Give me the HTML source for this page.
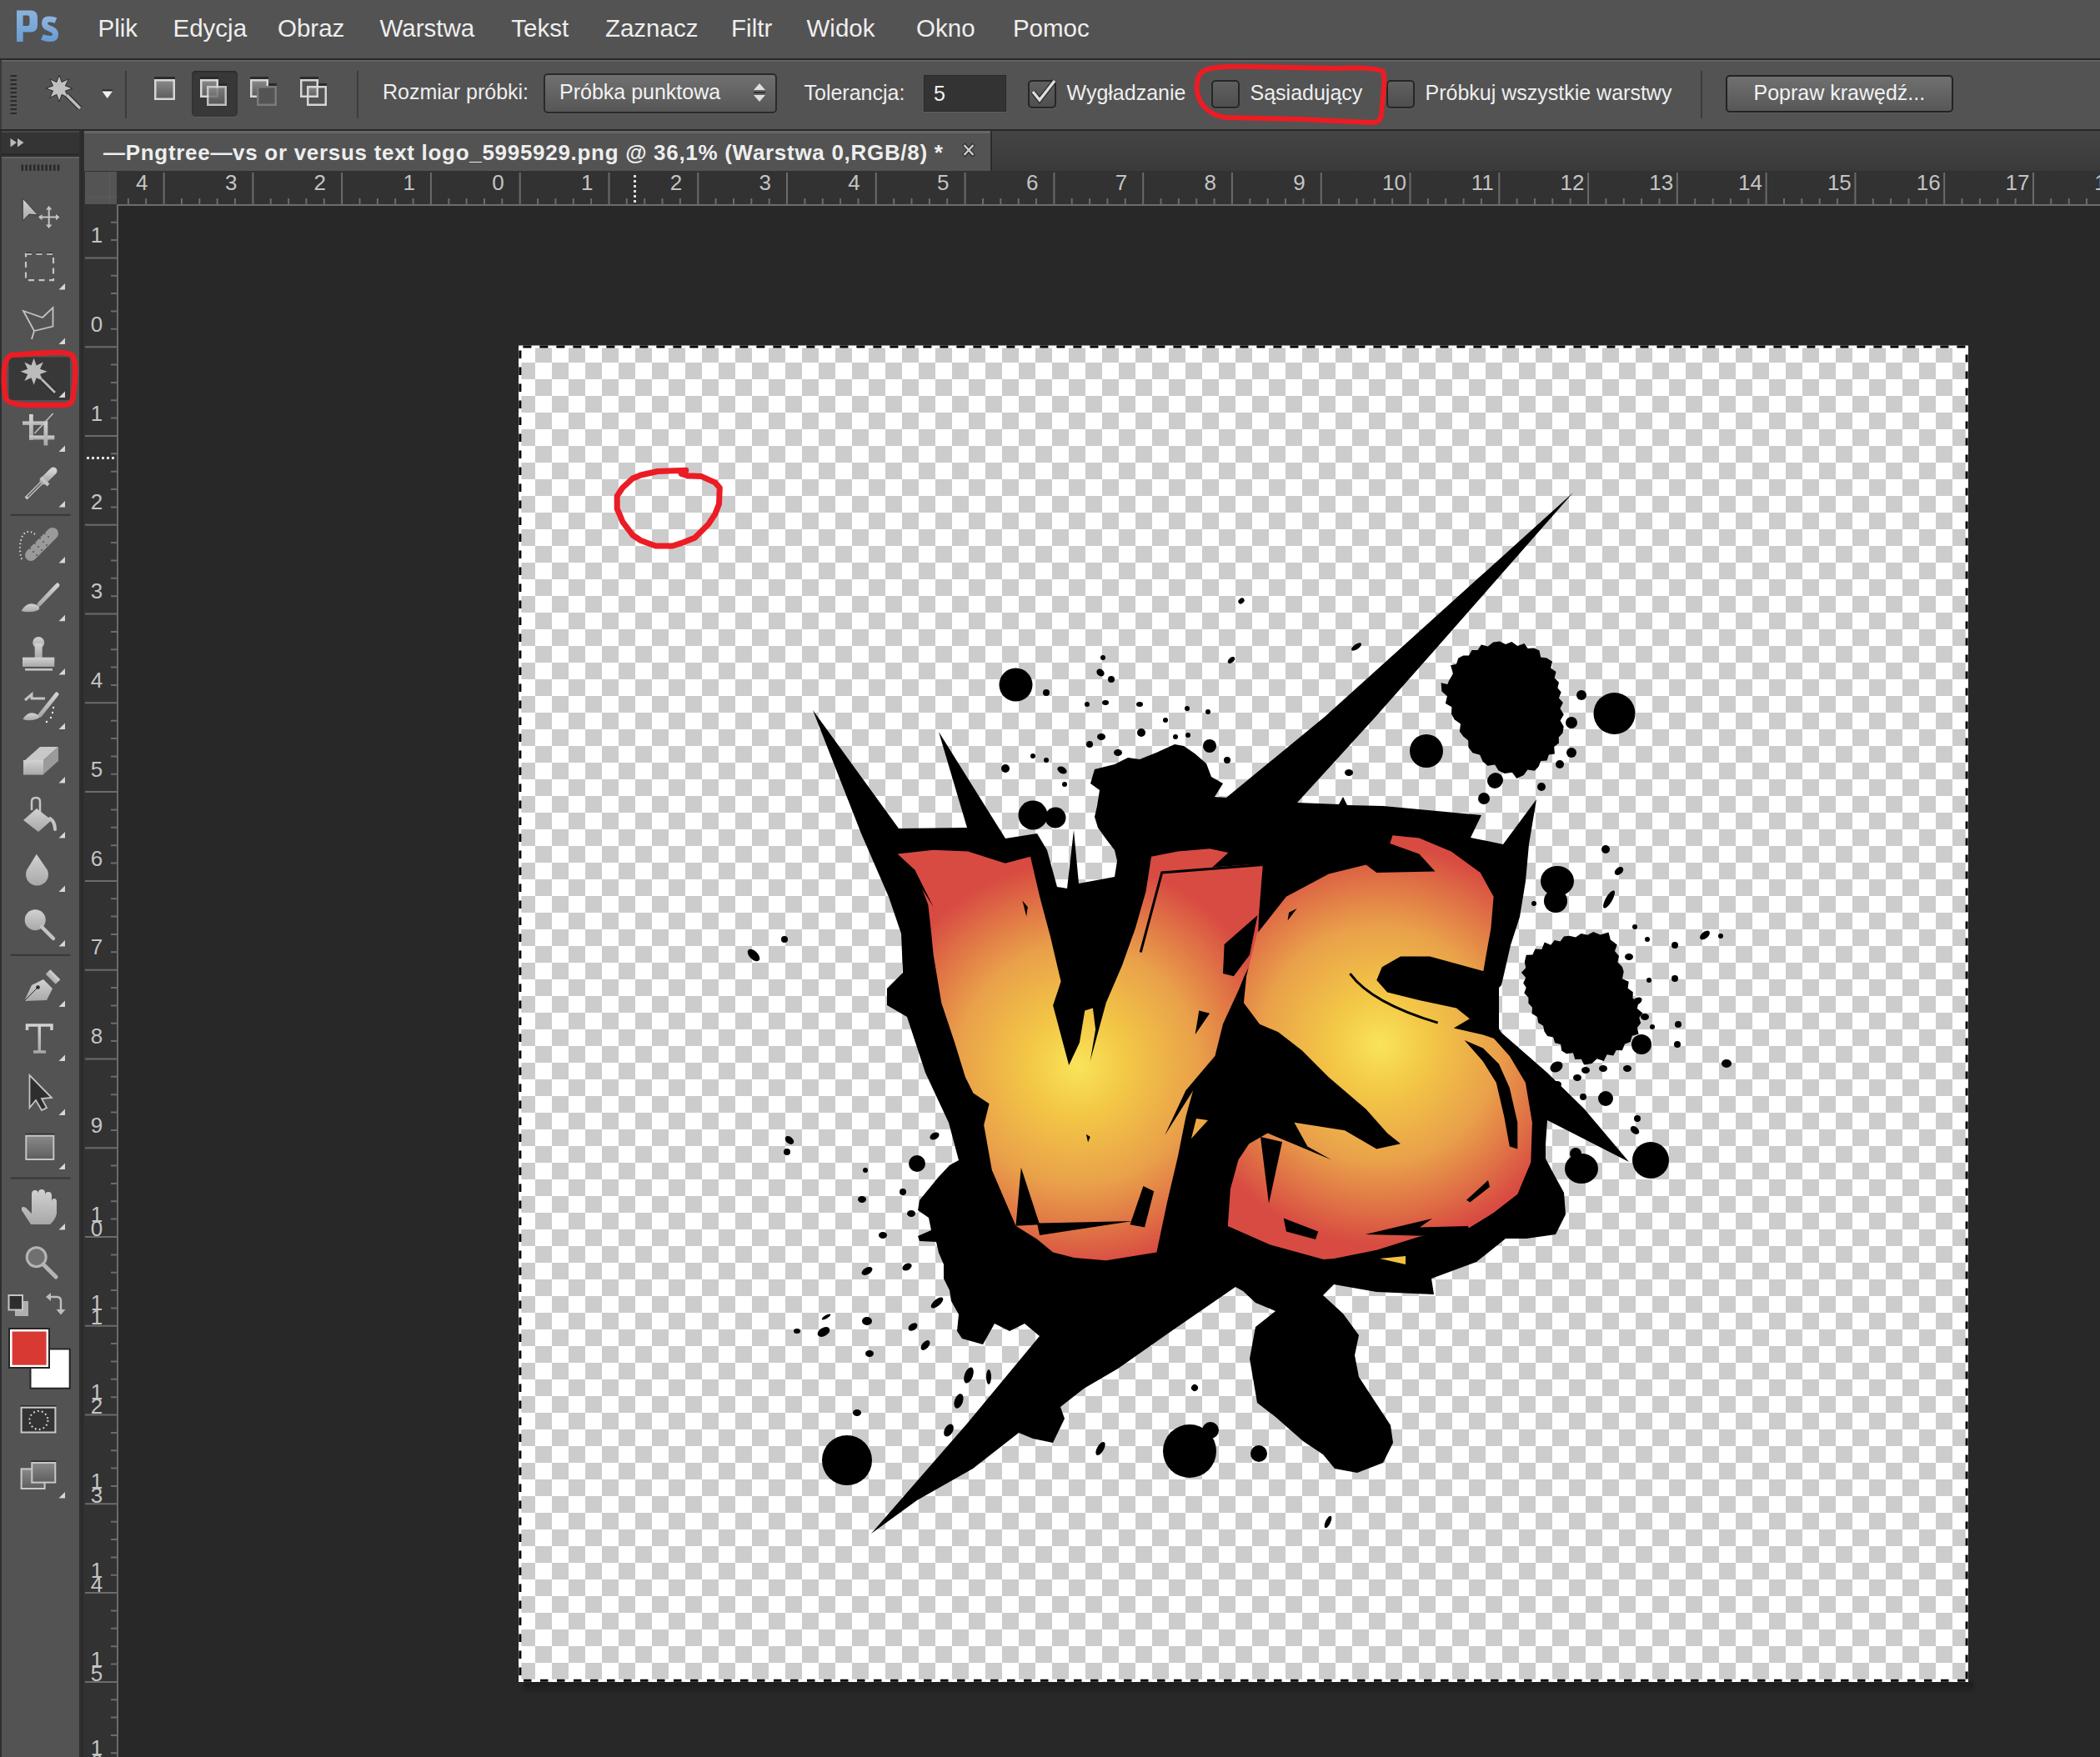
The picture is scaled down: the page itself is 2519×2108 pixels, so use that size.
<!DOCTYPE html><html><head><meta charset="utf-8"><title>ps</title><style>
*{margin:0;padding:0;box-sizing:border-box}
html,body{width:2519px;height:2108px;overflow:hidden;background:#282828;font-family:"Liberation Sans", sans-serif}
body{position:relative}
.a{position:absolute}
.t{position:absolute;white-space:pre}
svg{position:absolute;overflow:visible}
</style></head><body>
<div class="a" style="left:0px;top:0px;width:2519px;height:70px;background:#535353"></div>
<div class="a" style="left:0px;top:70px;width:2519px;height:2px;background:#2a2a2a"></div>
<svg style="left:0;top:0" width="90" height="60"><defs><linearGradient id="psg" x1="0" y1="0" x2="0" y2="1"><stop offset="0" stop-color="#8cb3de"/><stop offset="1" stop-color="#6a9dd5"/></linearGradient></defs><path fill-rule="evenodd" fill="url(#psg)" d="M20,12.4 H37 Q45,12.4 45,21 V30 Q45,38.6 37,38.6 H27.6 V50 H20 Z M27.6,18.6 H33 Q35.5,18.6 35.5,21.5 V28 Q35.5,31 33,31 H27.6 Z"/><path fill="none" stroke="url(#psg)" stroke-width="7" d="M67,24.5 Q63,23 58.5,23 Q53.5,23 53.5,28 Q53.5,32 58,33.5 L62.5,35.5 Q66.5,37.5 66.5,41.5 Q66.5,46.5 60.5,46.5 Q55,46.5 50.5,44.5"/></svg>
<div class="t" style="left:117.5px;top:19.3px;font-size:29.5px;line-height:29.5px;color:#eeeeee;font-weight:400;">Plik</div>
<div class="t" style="left:207.5px;top:19.3px;font-size:29.5px;line-height:29.5px;color:#eeeeee;font-weight:400;">Edycja</div>
<div class="t" style="left:333.0px;top:19.3px;font-size:29.5px;line-height:29.5px;color:#eeeeee;font-weight:400;">Obraz</div>
<div class="t" style="left:455.5px;top:19.3px;font-size:29.5px;line-height:29.5px;color:#eeeeee;font-weight:400;">Warstwa</div>
<div class="t" style="left:613.3px;top:19.3px;font-size:29.5px;line-height:29.5px;color:#eeeeee;font-weight:400;">Tekst</div>
<div class="t" style="left:725.9px;top:19.3px;font-size:29.5px;line-height:29.5px;color:#eeeeee;font-weight:400;">Zaznacz</div>
<div class="t" style="left:877.1px;top:19.3px;font-size:29.5px;line-height:29.5px;color:#eeeeee;font-weight:400;">Filtr</div>
<div class="t" style="left:967.5px;top:19.3px;font-size:29.5px;line-height:29.5px;color:#eeeeee;font-weight:400;">Widok</div>
<div class="t" style="left:1099.1px;top:19.3px;font-size:29.5px;line-height:29.5px;color:#eeeeee;font-weight:400;">Okno</div>
<div class="t" style="left:1214.9px;top:19.3px;font-size:29.5px;line-height:29.5px;color:#eeeeee;font-weight:400;">Pomoc</div>
<div class="a" style="left:0px;top:72px;width:2519px;height:83px;background:#535353"></div>
<div class="a" style="left:0px;top:72px;width:2519px;height:2px;background:#626262"></div>
<div class="a" style="left:0px;top:155px;width:2519px;height:2px;background:#282828"></div>
<div class="a" style="left:0px;top:157px;width:101px;height:1951px;background:#2f2f2f"></div>
<div class="a" style="left:2px;top:157px;width:93px;height:29px;background:#343434;border-top:2px solid #474747;border-bottom:2px solid #2a2a2a"></div>
<div class="a" style="left:2px;top:188px;width:93px;height:1920px;background:#535353;border-top:2px solid #626262"></div>
<div class="a" style="left:96.5px;top:157px;width:2.5px;height:1951px;background:#2a2a2a"></div>
<div class="a" style="left:101px;top:157px;width:2418px;height:48px;background:linear-gradient(#444,#3a3a3a)"></div>
<div class="a" style="left:101px;top:157px;width:1087px;height:48px;background:#535353;border-top:3px solid #666"></div>
<div class="a" style="left:1188px;top:157px;width:2px;height:48px;background:#2c2c2c"></div>
<div class="a" style="left:101px;top:205px;width:2418px;height:42px;background:#323232"></div>
<div class="a" style="left:101px;top:247px;width:41px;height:1861px;background:#323232"></div>
<div class="a" style="left:102px;top:206px;width:38px;height:39px;background:#545454"></div>
<div class="a" style="left:131px;top:206px;width:1px;height:39px;background:#5c5c5c"></div>
<div class="a" style="left:102px;top:236px;width:38px;height:1px;background:#5c5c5c"></div>
<div class="a" style="left:140px;top:245px;width:2379px;height:2px;background:#6b6b6b"></div>
<div class="a" style="left:140px;top:245px;width:2px;height:1863px;background:#6b6b6b"></div>
<svg style="left:0;top:0" width="2519" height="2108" viewBox="0 0 2519 2108"><text x="163.1" y="228" font-size="26" fill="#c4c4c4" font-family="Liberation Sans">4</text><text x="269.9" y="228" font-size="26" fill="#c4c4c4" font-family="Liberation Sans">3</text><text x="376.6" y="228" font-size="26" fill="#c4c4c4" font-family="Liberation Sans">2</text><text x="483.4" y="228" font-size="26" fill="#c4c4c4" font-family="Liberation Sans">1</text><text x="590.2" y="228" font-size="26" fill="#c4c4c4" font-family="Liberation Sans">0</text><text x="697.0" y="228" font-size="26" fill="#c4c4c4" font-family="Liberation Sans">1</text><text x="803.8" y="228" font-size="26" fill="#c4c4c4" font-family="Liberation Sans">2</text><text x="910.5" y="228" font-size="26" fill="#c4c4c4" font-family="Liberation Sans">3</text><text x="1017.3" y="228" font-size="26" fill="#c4c4c4" font-family="Liberation Sans">4</text><text x="1124.1" y="228" font-size="26" fill="#c4c4c4" font-family="Liberation Sans">5</text><text x="1230.9" y="228" font-size="26" fill="#c4c4c4" font-family="Liberation Sans">6</text><text x="1337.7" y="228" font-size="26" fill="#c4c4c4" font-family="Liberation Sans">7</text><text x="1444.4" y="228" font-size="26" fill="#c4c4c4" font-family="Liberation Sans">8</text><text x="1551.2" y="228" font-size="26" fill="#c4c4c4" font-family="Liberation Sans">9</text><text x="1658.0" y="228" font-size="26" fill="#c4c4c4" font-family="Liberation Sans">10</text><text x="1764.8" y="228" font-size="26" fill="#c4c4c4" font-family="Liberation Sans">11</text><text x="1871.6" y="228" font-size="26" fill="#c4c4c4" font-family="Liberation Sans">12</text><text x="1978.3" y="228" font-size="26" fill="#c4c4c4" font-family="Liberation Sans">13</text><text x="2085.1" y="228" font-size="26" fill="#c4c4c4" font-family="Liberation Sans">14</text><text x="2191.9" y="228" font-size="26" fill="#c4c4c4" font-family="Liberation Sans">15</text><text x="2298.7" y="228" font-size="26" fill="#c4c4c4" font-family="Liberation Sans">16</text><text x="2405.5" y="228" font-size="26" fill="#c4c4c4" font-family="Liberation Sans">17</text><text x="2512.2" y="228" font-size="26" fill="#c4c4c4" font-family="Liberation Sans">18</text><path d="M153.9 238V245 M175.2 238V245 M196.6 207V245 M217.9 238V245 M239.3 238V245 M260.6 238V245 M282.0 238V245 M303.4 207V245 M324.7 238V245 M346.1 238V245 M367.4 238V245 M388.8 238V245 M410.1 207V245 M431.5 238V245 M452.9 238V245 M474.2 238V245 M495.6 238V245 M516.9 207V245 M538.3 238V245 M559.6 238V245 M581.0 238V245 M602.3 238V245 M623.7 207V245 M645.1 238V245 M666.4 238V245 M687.8 238V245 M709.1 238V245 M730.5 207V245 M751.8 238V245 M773.2 238V245 M794.5 238V245 M815.9 238V245 M837.3 207V245 M858.6 238V245 M880.0 238V245 M901.3 238V245 M922.7 238V245 M944.0 207V245 M965.4 238V245 M986.8 238V245 M1008.1 238V245 M1029.5 238V245 M1050.8 207V245 M1072.2 238V245 M1093.5 238V245 M1114.9 238V245 M1136.2 238V245 M1157.6 207V245 M1179.0 238V245 M1200.3 238V245 M1221.7 238V245 M1243.0 238V245 M1264.4 207V245 M1285.7 238V245 M1307.1 238V245 M1328.4 238V245 M1349.8 238V245 M1371.2 207V245 M1392.5 238V245 M1413.9 238V245 M1435.2 238V245 M1456.6 238V245 M1477.9 207V245 M1499.3 238V245 M1520.7 238V245 M1542.0 238V245 M1563.4 238V245 M1584.7 207V245 M1606.1 238V245 M1627.4 238V245 M1648.8 238V245 M1670.1 238V245 M1691.5 207V245 M1712.9 238V245 M1734.2 238V245 M1755.6 238V245 M1776.9 238V245 M1798.3 207V245 M1819.6 238V245 M1841.0 238V245 M1862.3 238V245 M1883.7 238V245 M1905.1 207V245 M1926.4 238V245 M1947.8 238V245 M1969.1 238V245 M1990.5 238V245 M2011.8 207V245 M2033.2 238V245 M2054.6 238V245 M2075.9 238V245 M2097.3 238V245 M2118.6 207V245 M2140.0 238V245 M2161.3 238V245 M2182.7 238V245 M2204.0 238V245 M2225.4 207V245 M2246.8 238V245 M2268.1 238V245 M2289.5 238V245 M2310.8 238V245 M2332.2 207V245 M2353.5 238V245 M2374.9 238V245 M2396.2 238V245 M2417.6 238V245 M2439.0 207V245 M2460.3 238V245 M2481.7 238V245 M2503.0 238V245" stroke="#6b6b6b" stroke-width="2" fill="none"/><text x="116" y="291.0" text-anchor="middle" font-size="26" fill="#c4c4c4" font-family="Liberation Sans">1</text><text x="116" y="397.8" text-anchor="middle" font-size="26" fill="#c4c4c4" font-family="Liberation Sans">0</text><text x="116" y="504.6" text-anchor="middle" font-size="26" fill="#c4c4c4" font-family="Liberation Sans">1</text><text x="116" y="611.4" text-anchor="middle" font-size="26" fill="#c4c4c4" font-family="Liberation Sans">2</text><text x="116" y="718.1" text-anchor="middle" font-size="26" fill="#c4c4c4" font-family="Liberation Sans">3</text><text x="116" y="824.9" text-anchor="middle" font-size="26" fill="#c4c4c4" font-family="Liberation Sans">4</text><text x="116" y="931.7" text-anchor="middle" font-size="26" fill="#c4c4c4" font-family="Liberation Sans">5</text><text x="116" y="1038.5" text-anchor="middle" font-size="26" fill="#c4c4c4" font-family="Liberation Sans">6</text><text x="116" y="1145.3" text-anchor="middle" font-size="26" fill="#c4c4c4" font-family="Liberation Sans">7</text><text x="116" y="1252.0" text-anchor="middle" font-size="26" fill="#c4c4c4" font-family="Liberation Sans">8</text><text x="116" y="1358.8" text-anchor="middle" font-size="26" fill="#c4c4c4" font-family="Liberation Sans">9</text><text x="116" y="1465.6" text-anchor="middle" font-size="26" fill="#c4c4c4" font-family="Liberation Sans">1</text><text x="116" y="1482.6" text-anchor="middle" font-size="26" fill="#c4c4c4" font-family="Liberation Sans">0</text><text x="116" y="1572.4" text-anchor="middle" font-size="26" fill="#c4c4c4" font-family="Liberation Sans">1</text><text x="116" y="1589.4" text-anchor="middle" font-size="26" fill="#c4c4c4" font-family="Liberation Sans">1</text><text x="116" y="1679.2" text-anchor="middle" font-size="26" fill="#c4c4c4" font-family="Liberation Sans">1</text><text x="116" y="1696.2" text-anchor="middle" font-size="26" fill="#c4c4c4" font-family="Liberation Sans">2</text><text x="116" y="1785.9" text-anchor="middle" font-size="26" fill="#c4c4c4" font-family="Liberation Sans">1</text><text x="116" y="1802.9" text-anchor="middle" font-size="26" fill="#c4c4c4" font-family="Liberation Sans">3</text><text x="116" y="1892.7" text-anchor="middle" font-size="26" fill="#c4c4c4" font-family="Liberation Sans">1</text><text x="116" y="1909.7" text-anchor="middle" font-size="26" fill="#c4c4c4" font-family="Liberation Sans">4</text><text x="116" y="1999.5" text-anchor="middle" font-size="26" fill="#c4c4c4" font-family="Liberation Sans">1</text><text x="116" y="2016.5" text-anchor="middle" font-size="26" fill="#c4c4c4" font-family="Liberation Sans">5</text><text x="116" y="2106.3" text-anchor="middle" font-size="26" fill="#c4c4c4" font-family="Liberation Sans">1</text><text x="116" y="2123.3" text-anchor="middle" font-size="26" fill="#c4c4c4" font-family="Liberation Sans">6</text><text x="116" y="2213.1" text-anchor="middle" font-size="26" fill="#c4c4c4" font-family="Liberation Sans">1</text><text x="116" y="2230.1" text-anchor="middle" font-size="26" fill="#c4c4c4" font-family="Liberation Sans">7</text><path d="M133 266.7H141 M133 288.1H141 M102 309.4H141 M133 330.8H141 M133 352.1H141 M133 373.5H141 M133 394.8H141 M102 416.2H141 M133 437.6H141 M133 458.9H141 M133 480.3H141 M133 501.6H141 M102 523.0H141 M133 544.3H141 M133 565.7H141 M133 587.0H141 M133 608.4H141 M102 629.8H141 M133 651.1H141 M133 672.5H141 M133 693.8H141 M133 715.2H141 M102 736.5H141 M133 757.9H141 M133 779.3H141 M133 800.6H141 M133 822.0H141 M102 843.3H141 M133 864.7H141 M133 886.0H141 M133 907.4H141 M133 928.7H141 M102 950.1H141 M133 971.5H141 M133 992.8H141 M133 1014.2H141 M133 1035.5H141 M102 1056.9H141 M133 1078.2H141 M133 1099.6H141 M133 1120.9H141 M133 1142.3H141 M102 1163.7H141 M133 1185.0H141 M133 1206.4H141 M133 1227.7H141 M133 1249.1H141 M102 1270.4H141 M133 1291.8H141 M133 1313.2H141 M133 1334.5H141 M133 1355.9H141 M102 1377.2H141 M133 1398.6H141 M133 1419.9H141 M133 1441.3H141 M133 1462.6H141 M102 1484.0H141 M133 1505.4H141 M133 1526.7H141 M133 1548.1H141 M133 1569.4H141 M102 1590.8H141 M133 1612.1H141 M133 1633.5H141 M133 1654.8H141 M133 1676.2H141 M102 1697.6H141 M133 1718.9H141 M133 1740.3H141 M133 1761.6H141 M133 1783.0H141 M102 1804.3H141 M133 1825.7H141 M133 1847.1H141 M133 1868.4H141 M133 1889.8H141 M102 1911.1H141 M133 1932.5H141 M133 1953.8H141 M133 1975.2H141 M133 1996.5H141 M102 2017.9H141 M133 2039.3H141 M133 2060.6H141 M133 2082.0H141 M133 2103.3H141" stroke="#6b6b6b" stroke-width="2" fill="none"/><path d="M761.5 210V243" stroke="#dddddd" stroke-width="3" stroke-dasharray="3 3" fill="none"/><path d="M104 549.5H139" stroke="#dddddd" stroke-width="3" stroke-dasharray="3 3" fill="none"/></svg>
<div class="a" style="left:628px;top:2018px;width:1739px;height:14px;background:linear-gradient(rgba(0,0,0,0.32),rgba(0,0,0,0));filter:blur(1.5px)"></div>
<div class="a" style="left:622px;top:415px;width:1739px;height:1603px;background:repeating-conic-gradient(#cccccc 0 25%,#ffffff 0 50%) 0 0/40px 40px"></div>
<svg style="left:0;top:0" width="2519" height="2108" viewBox="0 0 2519 2108">
<defs>
<radialGradient id="gv" gradientUnits="userSpaceOnUse" cx="1293" cy="1278" r="290" fx="1293" fy="1278">
<stop offset="0" stop-color="#f9e45a"/><stop offset="0.2" stop-color="#f3c846"/><stop offset="0.5" stop-color="#e9a04a"/><stop offset="0.72" stop-color="#de6a45"/><stop offset="0.84" stop-color="#d84b42"/><stop offset="1" stop-color="#d84b42"/></radialGradient>
<radialGradient id="gs" gradientUnits="userSpaceOnUse" cx="1655" cy="1253" r="285" fx="1655" fy="1253">
<stop offset="0" stop-color="#f9e45a"/><stop offset="0.2" stop-color="#f3c846"/><stop offset="0.5" stop-color="#e9a04a"/><stop offset="0.72" stop-color="#de6a45"/><stop offset="0.84" stop-color="#d84b42"/><stop offset="1" stop-color="#d84b42"/></radialGradient>
<clipPath id="cv"><rect x="622" y="415" width="1739" height="1603"/></clipPath>
</defs>
<g clip-path="url(#cv)">
<path d="M975.0,852.0 L1078.0,994.0 L1160.0,993.0 L1126.0,878.0 L1206.0,1006.0 L1244.0,1000.0 L1256.0,1020.0 L1268.0,1064.0 L1280.0,1066.0 L1288.0,996.0 L1294.0,1060.0 L1337.0,1052.0 L1340.0,1033.0 L1337.0,1020.0 L1327.0,1007.0 L1317.0,993.0 L1313.0,980.0 L1316.0,967.0 L1319.0,948.0 L1308.0,940.0 L1313.0,923.0 L1337.0,917.0 L1353.0,909.0 L1367.0,911.0 L1387.0,903.0 L1409.0,893.0 L1420.0,895.0 L1433.0,904.0 L1447.0,916.0 L1453.0,932.0 L1467.0,940.0 L1457.0,956.0 L1471.0,957.0 L1589.0,860.0 L1887.0,591.0 L1720.0,781.0 L1650.0,860.0 L1556.0,963.0 L1606.0,965.0 L1611.0,956.0 L1616.0,966.0 L1659.0,967.0 L1777.0,978.0 L1764.0,1005.0 L1803.0,1013.0 L1843.0,959.0 L1834.0,1013.0 L1830.0,1057.0 L1823.0,1100.0 L1812.0,1134.0 L1801.0,1182.0 L1779.0,1204.0 L1801.0,1239.0 L1856.0,1287.0 L1900.0,1330.0 L1954.0,1394.0 L1856.0,1344.0 L1854.0,1373.0 L1854.0,1390.0 L1864.0,1409.0 L1876.0,1431.0 L1878.0,1457.0 L1866.0,1481.0 L1831.0,1486.0 L1806.0,1486.0 L1771.0,1514.0 L1717.0,1534.0 L1720.0,1553.0 L1651.0,1550.0 L1600.0,1541.0 L1587.0,1554.0 L1611.0,1576.0 L1630.0,1602.0 L1625.0,1626.0 L1630.0,1652.0 L1647.0,1678.0 L1668.0,1710.0 L1671.0,1731.0 L1659.0,1755.0 L1628.0,1767.0 L1601.0,1762.0 L1587.0,1745.0 L1563.0,1729.0 L1530.0,1700.0 L1508.0,1683.0 L1499.0,1630.0 L1506.0,1592.0 L1530.0,1573.0 L1506.0,1563.0 L1491.0,1549.0 L1482.0,1544.0 L1408.0,1595.0 L1341.0,1642.0 L1300.0,1666.0 L1272.0,1688.0 L1277.0,1702.0 L1263.0,1731.0 L1239.0,1726.0 L1222.0,1719.0 L1167.0,1762.0 L1100.0,1800.0 L1045.0,1840.0 L1160.0,1708.0 L1247.0,1603.0 L1229.0,1588.0 L1211.0,1597.0 L1193.0,1588.0 L1179.0,1613.0 L1154.0,1606.0 L1148.0,1597.0 L1150.0,1577.0 L1141.0,1561.0 L1139.0,1548.0 L1132.0,1534.0 L1132.0,1517.0 L1126.0,1503.0 L1123.0,1490.0 L1103.0,1489.0 L1101.0,1483.0 L1117.0,1476.0 L1114.0,1461.0 L1101.0,1452.0 L1103.0,1440.0 L1125.0,1413.0 L1139.0,1398.0 L1150.0,1392.0 L1138.0,1347.0 L1110.0,1287.0 L1088.0,1220.0 L1064.0,1206.0 L1064.0,1186.0 L1083.0,1167.0 L1081.0,1120.0 L1066.0,1076.0 L1033.0,1000.0Z" fill="#000"/>
<circle cx="1218.5" cy="821.6" r="20" fill="#000"/>
<circle cx="1239" cy="978" r="17.5" fill="#000"/>
<circle cx="1266" cy="981" r="12.5" fill="#000"/>
<circle cx="1936.5" cy="856" r="25" fill="#000"/>
<circle cx="1897" cy="834" r="6" fill="#000"/>
<circle cx="1885" cy="867" r="7" fill="#000"/>
<circle cx="1794" cy="936" r="9" fill="#000"/>
<circle cx="1780" cy="958" r="7" fill="#000"/>
<circle cx="1885" cy="903" r="6" fill="#000"/>
<circle cx="1871" cy="917" r="5" fill="#000"/>
<circle cx="1849" cy="944" r="5" fill="#000"/>
<circle cx="1451" cy="895" r="8" fill="#000"/>
<circle cx="1711" cy="901" r="20" fill="#000"/>
<circle cx="1793" cy="937" r="9" fill="#000"/>
<circle cx="1016" cy="1752" r="30" fill="#000"/>
<circle cx="1427" cy="1741" r="32" fill="#000"/>
<circle cx="1452" cy="1716" r="10" fill="#000"/>
<circle cx="1510" cy="1744" r="10" fill="#000"/>
<circle cx="1100" cy="1396" r="10" fill="#000"/>
<path d="M1740.1,798.3 L1747.0,796.8 L1749.2,789.8 L1755.1,786.5 L1762.0,786.4 L1765.5,780.0 L1772.5,779.9 L1776.8,773.5 L1784.8,775.4 L1791.2,770.5 L1799.0,769.6 L1806.0,772.9 L1813.4,770.1 L1820.2,775.0 L1828.5,772.1 L1832.6,777.9 L1840.1,777.6 L1846.5,780.5 L1848.1,788.4 L1855.4,789.4 L1862.0,793.8 L1860.2,801.5 L1866.5,805.9 L1864.7,813.6 L1870.0,818.7 L1868.4,825.2 L1872.7,830.6 L1869.9,837.4 L1874.9,843.0 L1871.4,850.1 L1875.8,857.3 L1871.6,864.5 L1875.7,871.7 L1874.5,879.4 L1869.7,884.4 L1870.0,891.5 L1864.2,896.1 L1864.9,904.6 L1857.8,905.5 L1855.6,912.5 L1848.2,913.1 L1845.6,919.7 L1840.9,924.7 L1832.4,923.5 L1827.7,930.0 L1819.3,933.9 L1813.9,926.8 L1804.7,928.1 L1797.5,924.6 L1793.1,917.5 L1784.5,918.7 L1778.5,913.5 L1775.2,905.7 L1766.4,903.3 L1761.4,896.4 L1761.2,888.5 L1755.2,883.5 L1750.8,877.6 L1752.0,868.5 L1744.6,863.2 L1741.0,856.6 L1741.4,848.3 L1733.9,843.9 L1735.9,835.3 L1729.4,829.5 L1728.6,819.2 L1736.3,820.9 L1738.0,816.7 L1743.0,808.3Z" fill="#000"/>
<path d="M1830.8,1145.8 L1838.3,1145.4 L1841.5,1138.6 L1849.4,1138.9 L1852.7,1130.5 L1860.2,1133.8 L1864.7,1128.1 L1871.5,1129.5 L1875.9,1123.5 L1882.3,1122.8 L1890.0,1124.6 L1896.6,1120.1 L1904.3,1121.8 L1911.3,1117.9 L1919.6,1121.4 L1929.5,1118.5 L1931.8,1127.4 L1939.8,1133.4 L1937.0,1141.0 L1942.0,1146.9 L1940.4,1154.3 L1945.9,1160.1 L1947.7,1165.8 L1946.0,1174.2 L1953.7,1177.8 L1952.6,1185.8 L1958.8,1190.2 L1958.5,1197.8 L1965.7,1201.7 L1963.8,1210.1 L1970.4,1215.5 L1966.3,1220.9 L1968.2,1227.5 L1963.9,1232.9 L1965.6,1240.8 L1957.9,1242.7 L1955.7,1250.1 L1948.9,1252.8 L1945.9,1260.3 L1938.7,1260.0 L1935.3,1266.5 L1927.6,1265.3 L1923.8,1273.0 L1915.7,1270.2 L1909.5,1276.1 L1900.1,1277.4 L1896.9,1270.8 L1889.3,1271.1 L1886.9,1263.3 L1878.9,1264.3 L1873.1,1260.4 L1872.1,1252.9 L1865.1,1251.2 L1863.2,1244.5 L1856.2,1243.0 L1852.5,1237.6 L1851.1,1230.7 L1845.1,1227.0 L1844.0,1219.9 L1837.5,1216.0 L1838.0,1208.8 L1833.4,1203.8 L1833.4,1196.8 L1828.3,1191.4 L1830.7,1185.1 L1827.2,1179.5 L1830.2,1173.1 L1824.9,1166.7 L1830.2,1161.2 L1828.8,1154.1Z" fill="#000"/>
<ellipse cx="1255" cy="831" rx="4" ry="4" transform="rotate(0 1255 831)" fill="#000"/>
<ellipse cx="1206" cy="922" rx="5" ry="5" transform="rotate(0 1206 922)" fill="#000"/>
<ellipse cx="1239" cy="907" rx="3" ry="3" transform="rotate(0 1239 907)" fill="#000"/>
<ellipse cx="1255" cy="912" rx="3" ry="3" transform="rotate(0 1255 912)" fill="#000"/>
<ellipse cx="1274" cy="924" rx="6" ry="4" transform="rotate(30 1274 924)" fill="#000"/>
<ellipse cx="1277" cy="941" rx="3" ry="3" transform="rotate(0 1277 941)" fill="#000"/>
<ellipse cx="1489" cy="721" rx="4" ry="3" transform="rotate(-40 1489 721)" fill="#000"/>
<ellipse cx="1477" cy="792" rx="5" ry="3" transform="rotate(-40 1477 792)" fill="#000"/>
<ellipse cx="1627" cy="776" rx="7" ry="3" transform="rotate(-35 1627 776)" fill="#000"/>
<ellipse cx="1323" cy="789" rx="3" ry="3" transform="rotate(0 1323 789)" fill="#000"/>
<ellipse cx="1320" cy="807" rx="5" ry="4" transform="rotate(40 1320 807)" fill="#000"/>
<ellipse cx="1333" cy="815" rx="4" ry="4" transform="rotate(0 1333 815)" fill="#000"/>
<ellipse cx="1304" cy="845" rx="3" ry="3" transform="rotate(0 1304 845)" fill="#000"/>
<ellipse cx="1326" cy="843" rx="4" ry="3" transform="rotate(0 1326 843)" fill="#000"/>
<ellipse cx="1367" cy="845" rx="4" ry="3" transform="rotate(0 1367 845)" fill="#000"/>
<ellipse cx="1424" cy="850" rx="3" ry="3" transform="rotate(0 1424 850)" fill="#000"/>
<ellipse cx="1449" cy="854" rx="3" ry="3" transform="rotate(0 1449 854)" fill="#000"/>
<ellipse cx="1398" cy="864" rx="3" ry="3" transform="rotate(0 1398 864)" fill="#000"/>
<ellipse cx="1369" cy="879" rx="5" ry="5" transform="rotate(0 1369 879)" fill="#000"/>
<ellipse cx="1321" cy="884" rx="5" ry="4" transform="rotate(0 1321 884)" fill="#000"/>
<ellipse cx="1410" cy="884" rx="3" ry="3" transform="rotate(0 1410 884)" fill="#000"/>
<ellipse cx="1425" cy="882" rx="3" ry="3" transform="rotate(0 1425 882)" fill="#000"/>
<ellipse cx="1472" cy="912" rx="4" ry="4" transform="rotate(0 1472 912)" fill="#000"/>
<ellipse cx="1307" cy="893" rx="4" ry="4" transform="rotate(0 1307 893)" fill="#000"/>
<ellipse cx="1341" cy="903" rx="5" ry="4" transform="rotate(0 1341 903)" fill="#000"/>
<ellipse cx="1618" cy="927" rx="5" ry="4" transform="rotate(0 1618 927)" fill="#000"/>
<ellipse cx="1926" cy="1019" rx="5" ry="5" transform="rotate(0 1926 1019)" fill="#000"/>
<ellipse cx="1942" cy="1045" rx="6" ry="4" transform="rotate(-40 1942 1045)" fill="#000"/>
<ellipse cx="1930" cy="1079" rx="4" ry="12" transform="rotate(30 1930 1079)" fill="#000"/>
<ellipse cx="1840" cy="1084" rx="3" ry="3" transform="rotate(0 1840 1084)" fill="#000"/>
<ellipse cx="1961" cy="1112" rx="3" ry="3" transform="rotate(0 1961 1112)" fill="#000"/>
<ellipse cx="1976" cy="1127" rx="3" ry="3" transform="rotate(0 1976 1127)" fill="#000"/>
<ellipse cx="2009" cy="1134" rx="4" ry="4" transform="rotate(0 2009 1134)" fill="#000"/>
<ellipse cx="2045" cy="1122" rx="7" ry="4" transform="rotate(-40 2045 1122)" fill="#000"/>
<ellipse cx="2064" cy="1123" rx="3" ry="3" transform="rotate(0 2064 1123)" fill="#000"/>
<ellipse cx="1954" cy="1148" rx="5" ry="4" transform="rotate(0 1954 1148)" fill="#000"/>
<ellipse cx="1978" cy="1176" rx="3" ry="3" transform="rotate(0 1978 1176)" fill="#000"/>
<ellipse cx="2009" cy="1174" rx="4" ry="4" transform="rotate(0 2009 1174)" fill="#000"/>
<ellipse cx="1964" cy="1201" rx="6" ry="4" transform="rotate(-30 1964 1201)" fill="#000"/>
<ellipse cx="1973" cy="1220" rx="5" ry="4" transform="rotate(0 1973 1220)" fill="#000"/>
<ellipse cx="2013" cy="1229" rx="4" ry="4" transform="rotate(0 2013 1229)" fill="#000"/>
<ellipse cx="1982" cy="1232" rx="3" ry="3" transform="rotate(0 1982 1232)" fill="#000"/>
<ellipse cx="2012" cy="1253" rx="4" ry="4" transform="rotate(0 2012 1253)" fill="#000"/>
<ellipse cx="1969" cy="1253" rx="12" ry="12" transform="rotate(0 1969 1253)" fill="#000"/>
<ellipse cx="1952" cy="1282" rx="5" ry="4" transform="rotate(0 1952 1282)" fill="#000"/>
<ellipse cx="1923" cy="1282" rx="5" ry="4" transform="rotate(0 1923 1282)" fill="#000"/>
<ellipse cx="1902" cy="1284" rx="5" ry="4" transform="rotate(0 1902 1284)" fill="#000"/>
<ellipse cx="1867" cy="1280" rx="8" ry="6" transform="rotate(-30 1867 1280)" fill="#000"/>
<ellipse cx="1892" cy="1293" rx="5" ry="4" transform="rotate(0 1892 1293)" fill="#000"/>
<ellipse cx="1868" cy="1301" rx="5" ry="4" transform="rotate(0 1868 1301)" fill="#000"/>
<ellipse cx="1899" cy="1316" rx="4" ry="4" transform="rotate(0 1899 1316)" fill="#000"/>
<ellipse cx="1926" cy="1318" rx="9" ry="9" transform="rotate(0 1926 1318)" fill="#000"/>
<ellipse cx="1964" cy="1342" rx="4" ry="4" transform="rotate(0 1964 1342)" fill="#000"/>
<ellipse cx="1961" cy="1356" rx="6" ry="4" transform="rotate(40 1961 1356)" fill="#000"/>
<ellipse cx="2071" cy="1276" rx="6" ry="5" transform="rotate(0 2071 1276)" fill="#000"/>
<ellipse cx="1980" cy="1392" rx="22" ry="22" transform="rotate(0 1980 1392)" fill="#000"/>
<ellipse cx="1897" cy="1402" rx="20" ry="18" transform="rotate(0 1897 1402)" fill="#000"/>
<ellipse cx="1890" cy="1384" rx="7" ry="7" transform="rotate(0 1890 1384)" fill="#000"/>
<ellipse cx="941" cy="1127" rx="4" ry="4" transform="rotate(0 941 1127)" fill="#000"/>
<ellipse cx="904" cy="1146" rx="9" ry="5" transform="rotate(45 904 1146)" fill="#000"/>
<ellipse cx="1121" cy="1363" rx="6" ry="4" transform="rotate(-30 1121 1363)" fill="#000"/>
<ellipse cx="947" cy="1368" rx="6" ry="4" transform="rotate(40 947 1368)" fill="#000"/>
<ellipse cx="944" cy="1382" rx="4" ry="4" transform="rotate(0 944 1382)" fill="#000"/>
<ellipse cx="1038" cy="1404" rx="3" ry="3" transform="rotate(0 1038 1404)" fill="#000"/>
<ellipse cx="1083" cy="1430" rx="4" ry="4" transform="rotate(0 1083 1430)" fill="#000"/>
<ellipse cx="1034" cy="1439" rx="5" ry="4" transform="rotate(0 1034 1439)" fill="#000"/>
<ellipse cx="1093" cy="1456" rx="5" ry="4" transform="rotate(0 1093 1456)" fill="#000"/>
<ellipse cx="1059" cy="1482" rx="5" ry="4" transform="rotate(0 1059 1482)" fill="#000"/>
<ellipse cx="1088" cy="1520" rx="6" ry="4" transform="rotate(-30 1088 1520)" fill="#000"/>
<ellipse cx="1040" cy="1525" rx="7" ry="4" transform="rotate(-30 1040 1525)" fill="#000"/>
<ellipse cx="1124" cy="1563" rx="9" ry="4" transform="rotate(-40 1124 1563)" fill="#000"/>
<ellipse cx="991" cy="1580" rx="6" ry="2" transform="rotate(-30 991 1580)" fill="#000"/>
<ellipse cx="1040" cy="1585" rx="6" ry="5" transform="rotate(0 1040 1585)" fill="#000"/>
<ellipse cx="1095" cy="1592" rx="6" ry="4" transform="rotate(-35 1095 1592)" fill="#000"/>
<ellipse cx="988" cy="1598" rx="8" ry="5" transform="rotate(-30 988 1598)" fill="#000"/>
<ellipse cx="956" cy="1597" rx="4" ry="3" transform="rotate(0 956 1597)" fill="#000"/>
<ellipse cx="1110" cy="1614" rx="7" ry="4" transform="rotate(-50 1110 1614)" fill="#000"/>
<ellipse cx="1043" cy="1624" rx="5" ry="4" transform="rotate(0 1043 1624)" fill="#000"/>
<ellipse cx="1162" cy="1650" rx="5" ry="10" transform="rotate(20 1162 1650)" fill="#000"/>
<ellipse cx="1186" cy="1652" rx="3" ry="9" transform="rotate(0 1186 1652)" fill="#000"/>
<ellipse cx="1150" cy="1681" rx="5" ry="9" transform="rotate(20 1150 1681)" fill="#000"/>
<ellipse cx="1028" cy="1695" rx="5" ry="4" transform="rotate(0 1028 1695)" fill="#000"/>
<ellipse cx="1138" cy="1716" rx="5" ry="8" transform="rotate(30 1138 1716)" fill="#000"/>
<ellipse cx="1433" cy="1665" rx="4" ry="4" transform="rotate(40 1433 1665)" fill="#000"/>
<ellipse cx="1320" cy="1738" rx="4" ry="9" transform="rotate(30 1320 1738)" fill="#000"/>
<ellipse cx="1593" cy="1826" rx="3" ry="8" transform="rotate(25 1593 1826)" fill="#000"/>
<ellipse cx="1868" cy="1057" rx="20" ry="18" transform="rotate(0 1868 1057)" fill="#000"/>
<ellipse cx="1866" cy="1081" rx="14" ry="14" transform="rotate(0 1866 1081)" fill="#000"/>
<path d="M1076.6,1024.6 L1119.7,1019.8 L1161.1,1021.4 L1205.7,1035.8 L1236.0,1027.8 L1247.1,1075.6 L1259.9,1123.4 L1272.6,1177.6 L1263.1,1206.3 L1282.2,1278.0 L1294.9,1250.9 L1301.3,1212.6 L1310.9,1209.4 L1314.1,1234.9 L1307.7,1273.2 L1326.8,1203.1 L1345.9,1158.5 L1361.9,1113.8 L1374.6,1069.2 L1381.0,1027.8 L1412.8,1021.4 L1451.1,1018.2 L1473.4,1023.0 L1454.3,1040.5 L1495.7,1037.4 L1514.8,1037.4 L1510.0,1097.9 L1508.5,1139.3 L1492.5,1171.2 L1486.1,1187.1 L1467.0,1228.6 L1457.5,1266.8 L1432.0,1305.0 L1422.4,1340.1 L1412.8,1387.9 L1400.1,1442.1 L1387.4,1502.6 L1326.8,1512.2 L1288.6,1509.0 L1263.1,1502.6 L1244.0,1486.7 L1218.5,1470.8 L1189.8,1403.8 L1180.2,1349.7 L1186.6,1324.2 L1167.5,1311.4 L1157.9,1292.3 L1145.2,1250.9 L1129.2,1203.1 L1119.7,1145.7 L1116.5,1113.8 L1113.3,1085.2 L1097.4,1043.7Z" fill="url(#gv)"/>
<path d="M1495.1,1171.3 L1507.8,1120.3 L1542.9,1075.7 L1593.9,1048.6 L1638.6,1037.4 L1651.3,1047.0 L1721.5,1045.4 L1702.3,1024.6 L1667.3,1011.9 L1670.5,1002.3 L1702.3,1005.5 L1740.6,1021.5 L1775.7,1047.0 L1791.6,1075.7 L1788.4,1113.9 L1782.1,1149.0 L1778.9,1168.1 L1778.9,1203.2 L1782.1,1235.1 L1810.8,1267.0 L1829.9,1298.9 L1837.9,1346.7 L1836.3,1394.5 L1820.3,1432.8 L1791.6,1455.1 L1762.9,1472.7 L1702.3,1483.8 L1651.3,1499.8 L1600.3,1510.0 L1587.6,1510.9 L1523.8,1493.4 L1472.8,1471.1 L1475.9,1426.4 L1485.5,1391.4 L1498.3,1372.2 L1520.6,1359.5 L1539.7,1367.4 L1597.1,1391.4 L1568.4,1375.4 L1552.5,1346.7 L1613.1,1356.3 L1651.3,1378.6 L1680.0,1372.2 L1664.1,1359.5 L1638.6,1330.8 L1593.9,1292.5 L1562.0,1260.6 L1533.3,1238.3 L1511.0,1228.7 L1491.9,1203.2Z" fill="url(#gs)"/>
<path d="M1084.6,1040.5 L1097.4,1043.7 L1119.7,1088.3 L1103.7,1062.9Z" fill="#000"/>
<path d="M1226.4,1080.4 L1232.8,1088.3 L1231.2,1099.5Z" fill="#000"/>
<path d="M1224.8,1400.7 L1247.1,1469.2 L1218.5,1470.8Z" fill="#000"/>
<path d="M1244.0,1467.6 L1358.7,1465.0 L1247.1,1481.9Z" fill="#000"/>
<path d="M1371.4,1423.0 L1384.2,1429.3 L1373.0,1472.4 L1355.5,1469.2Z" fill="#000"/>
<path d="M1457.5,1266.8 L1396.9,1362.4 L1422.4,1308.2Z" fill="#000"/>
<path d="M1438.3,1212.6 L1451.1,1215.8 L1433.6,1241.3Z" fill="#000"/>
<path d="M1467.0,1168.0 L1468.6,1133.0 L1508.5,1097.9 L1498.9,1145.7 L1479.8,1171.2Z" fill="#000"/>
<path d="M1302.9,1360.8 L1307.7,1364.0 L1305.1,1370.4Z" fill="#000"/>
<path d="M1368.2,1142.5 L1393.7,1046.9 L1514.8,1037.4" stroke="#000" stroke-width="3" fill="none"/>
<path d="M1778.9,1164.9 L1715.1,1147.4 L1680.0,1147.4 L1657.7,1160.2 L1651.3,1176.1 L1664.1,1190.5 L1702.3,1200.0 L1747.0,1209.6 L1762.9,1222.3 L1743.8,1233.5 L1778.9,1241.5 L1798.0,1247.9 L1798.0,1164.9Z" fill="#000"/>
<path d="M1756.6,1247.9 L1778.9,1257.4 L1798.0,1276.6 L1810.8,1305.3 L1820.3,1346.7 L1820.3,1378.6 L1810.8,1375.4 L1804.4,1340.3 L1794.8,1298.9 L1778.9,1273.4Z" fill="#000"/>
<path d="M1539.7,1461.5 L1581.2,1477.4 L1578.0,1487.0 L1542.9,1477.4Z" fill="#000"/>
<path d="M1759.7,1439.2 L1785.3,1416.9 L1778.9,1426.4 L1762.9,1442.4Z" fill="#000"/>
<path d="M1546.1,1094.8 L1555.7,1090.0 L1544.5,1104.4Z" fill="#000"/>
<path d="M1619.4,1168.1 Q1644.9,1203.2 1724.7,1227.1" stroke="#000" stroke-width="3" fill="none"/>
<path d="M1435,1342 L1449,1344 L1429,1366 Z" fill="#eea843"/>
<path d="M1637.7,1481.0 L1718.0,1462.0 L1703.0,1472.6 L1761.0,1471.0 L1763.0,1483.0 L1716.6,1483.0Z" fill="#000"/>
<path d="M1759.0,1440.0 L1785.0,1416.0 L1787.0,1424.0 L1764.0,1442.0Z" fill="#000"/>
<path d="M1512.0,1364.0 L1538.0,1370.0 L1522.0,1444.0Z" fill="#000"/>
<path d="M1655,1510 L1686,1507 L1686,1517 Z" fill="#f2c040"/>
</g></svg>
<svg style="left:0;top:0" width="100" height="1800" viewBox="0 0 100 1800"><defs><linearGradient id="tg" x1="0" y1="0" x2="0" y2="1"><stop offset="0" stop-color="#d2d2d2"/><stop offset="1" stop-color="#a8a8a8"/></linearGradient>
<linearGradient id="tg2" x1="0" y1="0" x2="0" y2="1"><stop offset="0" stop-color="#8a8a8a"/><stop offset="1" stop-color="#5e5e5e"/></linearGradient></defs><polygon points="12.5,166 20,171 12.5,176.5" fill="#bbbbbb"/><polygon points="21,166 28.5,171 21,176.5" fill="#bbbbbb"/><rect x="25.5" y="197.5" width="2.6" height="7.5" fill="#2a2a2a"/><rect x="30.3" y="197.5" width="2.6" height="7.5" fill="#2a2a2a"/><rect x="35.1" y="197.5" width="2.6" height="7.5" fill="#2a2a2a"/><rect x="39.9" y="197.5" width="2.6" height="7.5" fill="#2a2a2a"/><rect x="44.7" y="197.5" width="2.6" height="7.5" fill="#2a2a2a"/><rect x="49.5" y="197.5" width="2.6" height="7.5" fill="#2a2a2a"/><rect x="54.3" y="197.5" width="2.6" height="7.5" fill="#2a2a2a"/><rect x="59.1" y="197.5" width="2.6" height="7.5" fill="#2a2a2a"/><rect x="63.9" y="197.5" width="2.6" height="7.5" fill="#2a2a2a"/><rect x="68.7" y="197.5" width="2.6" height="7.5" fill="#2a2a2a"/><polygon points="70.5,347.5 78,347.5 78,340" fill="#d8d8d8"/><polygon points="70.5,413.0 78,413.0 78,405.5" fill="#d8d8d8"/><polygon points="70.5,477.5 78,477.5 78,470" fill="#d8d8d8"/><polygon points="70.5,542.0 78,542.0 78,534.5" fill="#d8d8d8"/><polygon points="70.5,608.5 78,608.5 78,601" fill="#d8d8d8"/><polygon points="70.5,675.5 78,675.5 78,668" fill="#d8d8d8"/><polygon points="70.5,745.3 78,745.3 78,737.8" fill="#d8d8d8"/><polygon points="70.5,809.5 78,809.5 78,802" fill="#d8d8d8"/><polygon points="70.5,875.0 78,875.0 78,867.5" fill="#d8d8d8"/><polygon points="70.5,939.5 78,939.5 78,932" fill="#d8d8d8"/><polygon points="70.5,1005.5 78,1005.5 78,998" fill="#d8d8d8"/><polygon points="70.5,1070.0 78,1070.0 78,1062.5" fill="#d8d8d8"/><polygon points="70.5,1135.5 78,1135.5 78,1128" fill="#d8d8d8"/><polygon points="70.5,1208.0 78,1208.0 78,1200.5" fill="#d8d8d8"/><polygon points="70.5,1273.0 78,1273.0 78,1265.5" fill="#d8d8d8"/><polygon points="70.5,1338.0 78,1338.0 78,1330.5" fill="#d8d8d8"/><polygon points="70.5,1403.0 78,1403.0 78,1395.5" fill="#d8d8d8"/><polygon points="70.5,1475.5 78,1475.5 78,1468" fill="#d8d8d8"/><polygon points="70.5,1797.5 78,1797.5 78,1790" fill="#d8d8d8"/><polygon points="27.3,238 27.3,265 35,257 45.5,258" fill="url(#tg)" stroke="#2a2a2a" stroke-width="0.8"/><path d="M58.7,249 V272 M47.5,260.6 H70" stroke="#c4c4c4" stroke-width="2"/><polygon points="58.7,247 55,251.5 62.4,251.5" fill="#c4c4c4"/><polygon points="58.7,274 55,269.5 62.4,269.5" fill="#c4c4c4"/><polygon points="46,260.6 50.5,257 50.5,264.2" fill="#c4c4c4"/><polygon points="71.5,260.6 67,257 67,264.2" fill="#c4c4c4"/><rect x="31" y="304.6" width="33" height="31.5" fill="none" stroke="#c4c4c4" stroke-width="2.2" stroke-dasharray="7 5.5" stroke-dashoffset="0"/><path d="M31,303.5 H64" stroke="#2a2a2a" stroke-width="1" stroke-dasharray="7 5.5"/><path d="M28,373 L51,381 L63.5,369 L63.5,391.5 L41,397 Z M41,397 L38,407" fill="none" stroke="#c4c4c4" stroke-width="1.8"/><rect x="10.6" y="428.5" width="73.4" height="51.5" rx="3" fill="#383838"/><polygon points="56.6,445.8 48.0,448.9 51.9,457.1 43.7,453.2 40.6,461.8 37.5,453.2 29.3,457.1 33.2,448.9 24.6,445.8 33.2,442.7 29.3,434.5 37.5,438.4 40.6,429.8 43.7,438.4 51.9,434.5 48.0,442.7" fill="#bcbcbc"/><polygon points="70.5,477 78,477 78,469.5" fill="#d8d8d8"/><path d="M50,455 L66,471" stroke="#2a2a2a" stroke-width="5.5"/><path d="M50,455 L66,471" stroke="#b8b8b8" stroke-width="3"/><rect x="27" y="505.5" width="30" height="4.5" fill="url(#tg)"/><rect x="35" y="497" width="4.8" height="31" fill="url(#tg)"/><rect x="35" y="522.5" width="30.3" height="5" fill="url(#tg)"/><rect x="52.5" y="505.5" width="4.8" height="29" fill="url(#tg)"/><path d="M41.4,520 L63.7,496" stroke="#c4c4c4" stroke-width="1.5"/><path d="M31,598 L54,575" stroke="#c4c4c4" stroke-width="4" fill="none"/><path d="M33,596 L52,577" stroke="#555" stroke-width="1.5"/><path d="M52,577 L64,565" stroke="url(#tg)" stroke-width="9" stroke-linecap="round"/><path d="M49,573 L58,582" stroke="#c4c4c4" stroke-width="4"/><rect x="12.7" y="616.8" width="71.7" height="2" fill="#383838"/><rect x="12.7" y="1144.9" width="71.7" height="2" fill="#383838"/><rect x="12.7" y="1412.5" width="71.7" height="2" fill="#383838"/><path d="M37,666 L63,640" stroke="#9a9a9a" stroke-width="14" stroke-linecap="round"/><circle cx="40" cy="662" r="1" fill="#555"/><circle cx="46" cy="656" r="1" fill="#555"/><circle cx="52" cy="650" r="1" fill="#555"/><circle cx="58" cy="644" r="1" fill="#555"/><circle cx="44" cy="666" r="1" fill="#555"/><circle cx="50" cy="660" r="1" fill="#555"/><circle cx="56" cy="654" r="1" fill="#555"/><circle cx="36" cy="658" r="1" fill="#555"/><circle cx="42" cy="652" r="1" fill="#555"/><circle cx="48" cy="646" r="1" fill="#555"/><circle cx="54" cy="640" r="1" fill="#555"/><path d="M26,671 C20,650 28,630 42,641" fill="none" stroke="#dddddd" stroke-width="2" stroke-dasharray="1.5 3"/><path d="M47,725 L69,702" stroke="url(#tg)" stroke-width="5" stroke-linecap="round"/><path d="M25.5,733 Q32,722 42,725 Q50,728 46,732 Q36,736 25.5,733Z" fill="url(#tg)"/><circle cx="46.2" cy="771" r="7" fill="url(#tg)"/><rect x="41.7" y="772" width="9" height="17" fill="url(#tg)"/><rect x="27" y="788.7" width="38.3" height="11.2" fill="url(#tg)"/><rect x="30" y="802" width="33" height="2.6" fill="#c4c4c4"/><path d="M48,858 L68,833" stroke="url(#tg)" stroke-width="5" stroke-linecap="round"/><path d="M27.5,863 Q33,853 42,856 Q50,859 46,862 Q36,866 27.5,863Z" fill="url(#tg)"/><path d="M30,840 L38,833 L38,838 H54" fill="none" stroke="#c4c4c4" stroke-width="3"/><circle cx="64" cy="849" r="1.2" fill="#eee"/><circle cx="63" cy="855" r="1.2" fill="#eee"/><circle cx="61" cy="861" r="1.2" fill="#eee"/><circle cx="56" cy="866" r="1.2" fill="#eee"/><polygon points="30,912 48,896 70,896 52,912" fill="#c8c8c8"/><polygon points="52,912 70,896 70,913 52,929" fill="#9a9a9a"/><rect x="28" y="912" width="24" height="17.6" fill="url(#tg)"/><path d="M38,972 V962 Q38,957 43,957 Q48,957 48,962 V975" fill="none" stroke="#c4c4c4" stroke-width="2.5"/><polygon points="28,984 44,970 62,984 46,998" fill="url(#tg)"/><path d="M60,982 Q66,986 66,995" stroke="#c4c4c4" stroke-width="4" stroke-linecap="round" fill="none"/><path d="M43.8,1024.8 L57,1044 A13.5,13.5 0 1 1 32,1044 Z" fill="url(#tg)"/><circle cx="42.2" cy="1103.7" r="12.5" fill="url(#tg)"/><path d="M50,1112 L64,1126" stroke="#c4c4c4" stroke-width="4.5" stroke-linecap="round"/><polygon points="29,1201 38,1182 52,1175 63,1186 56,1200" fill="url(#tg)"/><rect x="55" y="1168" width="17" height="8" transform="rotate(45 63.5 1172)" fill="url(#tg)"/><path d="M29,1201 L45,1185" stroke="#2a2a2a" stroke-width="1"/><circle cx="45.5" cy="1184.5" r="2.3" fill="#2a2a2a"/><path d="M32.5,1236 V1230 H62 V1236 M47.3,1230 V1262 M40,1262 H55" fill="none" stroke="url(#tg)" stroke-width="3.5"/><polygon points="35.5,1290 35.5,1329 43,1320 50,1332 56,1329 50,1318 62,1317" fill="#2e2e2e" stroke="#c4c4c4" stroke-width="1.8"/><rect x="30.3" y="1360" width="35" height="1.6" fill="#2a2a2a"/><rect x="31.3" y="1362.7" width="33" height="28.3" fill="url(#tg2)" stroke="#c4c4c4" stroke-width="2"/><path d="M37,1469 L26,1452 Q25,1446 31,1449 L38,1456 V1433 Q38,1428 42,1428 Q46,1428 46,1433 V1448 V1431 Q46,1427 50,1427 Q54,1427 54,1431 V1448 V1434 Q54,1430 58,1430 Q62,1430 62,1434 V1450 V1442 Q62,1438 65,1438 Q68,1438 68,1442 V1456 Q66,1464 60,1469 Z" fill="url(#tg)"/><circle cx="43.7" cy="1508.2" r="11.5" fill="#707070" stroke="#b4b4b4" stroke-width="3"/><path d="M52,1517 L67,1532" stroke="#b4b4b4" stroke-width="5" stroke-linecap="round"/><rect x="18" y="1561" width="16" height="18" fill="#b0b0b0"/><rect x="10.5" y="1554" width="16.5" height="17.5" fill="#2e2e2e" stroke="#c4c4c4" stroke-width="2"/><path d="M57,1556 H68 Q73,1556 73,1561 V1572" fill="none" stroke="#bdbdbd" stroke-width="2.5"/><polygon points="55,1556 61,1551 61,1561" fill="#bdbdbd"/><polygon points="67.5,1571 78.5,1571 73,1577.5" fill="#bdbdbd"/><rect x="35.5" y="1617.5" width="49.2" height="49.2" fill="#262626"/><rect x="37.5" y="1619.5" width="45.2" height="45.2" fill="#ffffff"/><rect x="10" y="1593" width="50" height="49" fill="#262626"/><rect x="12" y="1595" width="46" height="45" fill="#ffffff"/><rect x="14.6" y="1597.5" width="41" height="40.2" fill="#d83a33"/><rect x="24.6" y="1686" width="42.8" height="1.6" fill="#2a2a2a"/><rect x="25.6" y="1688.7" width="40.8" height="29.8" fill="#333" stroke="#c8c8c8" stroke-width="2"/><circle cx="46.4" cy="1704" r="11" fill="none" stroke="#e0e0e0" stroke-width="2" stroke-dasharray="1.8 3.2"/><rect x="25.6" y="1762.4" width="28" height="23.6" fill="url(#tg2)" stroke="#c8c8c8" stroke-width="2"/><rect x="37.3" y="1752.5" width="30" height="1.6" fill="#2a2a2a"/><rect x="38.3" y="1755" width="28" height="23.6" fill="url(#tg2)" stroke="#c8c8c8" stroke-width="2"/></svg>
<div class="a" style="left:0px;top:72px;width:2px;height:83px;background:#3a3a3a"></div>
<svg style="left:0;top:0" width="240" height="160"><rect x="12.5" y="90" width="7.5" height="2.5" fill="#2a2a2a"/><rect x="12.5" y="92.5" width="7.5" height="1" fill="#5e5e5e"/><rect x="12.5" y="95" width="7.5" height="2.5" fill="#2a2a2a"/><rect x="12.5" y="97.5" width="7.5" height="1" fill="#5e5e5e"/><rect x="12.5" y="100" width="7.5" height="2.5" fill="#2a2a2a"/><rect x="12.5" y="102.5" width="7.5" height="1" fill="#5e5e5e"/><rect x="12.5" y="105" width="7.5" height="2.5" fill="#2a2a2a"/><rect x="12.5" y="107.5" width="7.5" height="1" fill="#5e5e5e"/><rect x="12.5" y="110" width="7.5" height="2.5" fill="#2a2a2a"/><rect x="12.5" y="112.5" width="7.5" height="1" fill="#5e5e5e"/><rect x="12.5" y="115" width="7.5" height="2.5" fill="#2a2a2a"/><rect x="12.5" y="117.5" width="7.5" height="1" fill="#5e5e5e"/><rect x="12.5" y="120" width="7.5" height="2.5" fill="#2a2a2a"/><rect x="12.5" y="122.5" width="7.5" height="1" fill="#5e5e5e"/><rect x="12.5" y="125" width="7.5" height="2.5" fill="#2a2a2a"/><rect x="12.5" y="127.5" width="7.5" height="1" fill="#5e5e5e"/><rect x="12.5" y="130" width="7.5" height="2.5" fill="#2a2a2a"/><rect x="12.5" y="132.5" width="7.5" height="1" fill="#5e5e5e"/><rect x="12.5" y="135" width="7.5" height="2.5" fill="#2a2a2a"/><rect x="12.5" y="137.5" width="7.5" height="1" fill="#5e5e5e"/><polygon points="87.0,106.0 78.4,109.1 82.3,117.3 74.1,113.4 71.0,122.0 67.9,113.4 59.7,117.3 63.6,109.1 55.0,106.0 63.6,102.9 59.7,94.7 67.9,98.6 71.0,90.0 74.1,98.6 82.3,94.7 78.4,102.9" fill="#c0c0c0" stroke="#2a2a2a" stroke-width="1"/><path d="M80,114 L96,130" stroke="#2a2a2a" stroke-width="6"/><path d="M80,114 L96,130" stroke="#bdbdbd" stroke-width="3.5"/><rect x="122.5" y="107.5" width="12.5" height="2" fill="#262626"/><polygon points="122.5,109.5 135,109.5 128.7,118" fill="#f0f0f0"/></svg>
<div class="a" style="left:150px;top:85px;width:2px;height:57px;background:#3c3c3c"></div>
<div class="a" style="left:428px;top:85px;width:2px;height:57px;background:#3c3c3c"></div>
<div class="a" style="left:2040px;top:85px;width:2px;height:57px;background:#3c3c3c"></div>
<div class="a" style="left:230px;top:85px;width:55px;height:55px;background:#383838;border-radius:5px;box-shadow:inset 0 1px 2px #222, 0 1px 0 #5e5e5e"></div>
<svg style="left:0;top:0" width="440" height="160"><rect x="185" y="92" width="25" height="3" fill="#2b2b2b"/><defs><linearGradient id="ig" x1="0" y1="0" x2="0" y2="1"><stop offset="0" stop-color="#8a8a8a"/><stop offset="1" stop-color="#5c5c5c"/></linearGradient></defs><rect x="186.25" y="96.25" width="22.5" height="22.5" fill="url(#ig)" stroke="#d6d6d6" stroke-width="2.5" opacity="1"/><rect x="240" y="92" width="22" height="3" fill="#2b2b2b"/><rect x="262" y="100" width="10" height="3" fill="#2b2b2b"/><rect x="241.25" y="96.25" width="19.5" height="19.5" fill="url(#ig)" stroke="#d6d6d6" stroke-width="2.5" opacity="1"/><rect x="249.25" y="104.25" width="21.5" height="21.5" fill="url(#ig)" stroke="#d6d6d6" stroke-width="2.5" opacity="0.85"/><rect x="300" y="92" width="22" height="3" fill="#2b2b2b"/><rect x="322" y="100" width="10" height="3" fill="#2b2b2b"/><rect x="301.25" y="96.25" width="19.5" height="19.5" fill="url(#ig)" stroke="#d6d6d6" stroke-width="2.5" opacity="1"/><rect x="309.25" y="104.25" width="21.5" height="21.5" fill="#545454" stroke="#7a7a7a" stroke-width="2.5" opacity="1"/><rect x="360" y="92" width="22" height="3" fill="#2b2b2b"/><rect x="382" y="100" width="10" height="3" fill="#2b2b2b"/><rect x="368" y="103" width="14" height="14" fill="url(#ig)"/><rect x="361.25" y="96.25" width="19.5" height="19.5" fill="none" stroke="#d6d6d6" stroke-width="2.5"/><rect x="369.25" y="104.25" width="21.5" height="21.5" fill="none" stroke="#d6d6d6" stroke-width="2.5"/></svg>
<div class="t" style="left:459.0px;top:98.3px;font-size:25px;line-height:25px;color:#eeeeee;font-weight:400;">Rozmiar próbki:</div>
<div class="a" style="left:652px;top:88px;width:280px;height:48px;background:linear-gradient(#707070,#565656);border:2px solid #2a2a2a;border-radius:5px;box-shadow:0 1px 0 #5e5e5e"></div>
<div class="t" style="left:671.0px;top:98.3px;font-size:25px;line-height:25px;color:#f2f2f2;font-weight:400;">Próbka punktowa</div>
<svg style="left:900px;top:96px" width="24" height="32"><polygon points="11,4 18,12 4,12" fill="#e0e0e0"/><rect x="4" y="14" width="14" height="2" fill="#333"/><polygon points="4,18 18,18 11,26" fill="#e0e0e0"/></svg>
<div class="t" style="left:964.5px;top:98.8px;font-size:25px;line-height:25px;color:#eeeeee;font-weight:400;">Tolerancja:</div>
<div class="a" style="left:1108px;top:90px;width:99px;height:44px;background:#333333;border:1.5px solid #2a2a2a;box-shadow:0 1px 0 #5e5e5e"></div>
<div class="t" style="left:1120.0px;top:99.8px;font-size:25px;line-height:25px;color:#f2f2f2;font-weight:400;">5</div>
<div class="a" style="left:1233px;top:96px;width:34px;height:34px;background:linear-gradient(#606060,#4e4e4e);border:2px solid #262626;border-radius:5px;box-shadow:0 1px 0 #606060"></div>
<svg style="left:1230px;top:90px" width="50" height="45"><path d="M9,20 L17,30 L35,7" stroke="#2a2a2a" stroke-width="6" fill="none"/><path d="M9,20 L17,30 L35,7" stroke="#dedede" stroke-width="3.5" fill="none"/></svg>
<div class="t" style="left:1279.5px;top:98.8px;font-size:25px;line-height:25px;color:#eeeeee;font-weight:400;">Wygładzanie</div>
<div class="a" style="left:1453px;top:96px;width:34px;height:34px;background:linear-gradient(#606060,#4e4e4e);border:2px solid #262626;border-radius:5px;box-shadow:0 1px 0 #606060"></div>
<div class="t" style="left:1499.5px;top:98.8px;font-size:25px;line-height:25px;color:#eeeeee;font-weight:400;">Sąsiadujący</div>
<div class="a" style="left:1663px;top:96px;width:34px;height:34px;background:linear-gradient(#606060,#4e4e4e);border:2px solid #262626;border-radius:5px;box-shadow:0 1px 0 #606060"></div>
<div class="t" style="left:1709.5px;top:98.8px;font-size:25px;line-height:25px;color:#eeeeee;font-weight:400;">Próbkuj wszystkie warstwy</div>
<div class="a" style="left:2070px;top:90px;width:273px;height:45px;background:linear-gradient(#707070,#575757);border:2px solid #222;border-radius:5px;box-shadow:0 1px 0 #606060"></div>
<div class="t" style="left:2103.5px;top:98.8px;font-size:25px;line-height:25px;color:#f2f2f2;font-weight:400;">Popraw krawędź...</div>
<div class="t" style="left:124.0px;top:169.5px;font-size:26px;line-height:26px;color:#eeeeee;font-weight:700;letter-spacing:0.7px">—Pngtree—vs or versus text logo_5995929.png @ 36,1% (Warstwa 0,RGB/8) *</div>
<svg style="left:1150px;top:168px" width="24" height="24"><path d="M6,5 L18,19 M18,5 L6,19" stroke="#262626" stroke-width="4.5"/><path d="M6.5,6 L17.5,18 M17.5,6 L6.5,18" stroke="#cfcfcf" stroke-width="2.5"/></svg>
<svg style="left:0;top:0" width="2519" height="2108" viewBox="0 0 2519 2108"><path d="M622.4,416.1 H2360.6 M622.4,2016.2 H2360.6 M623.9,414.6 V2017.7 M2359.1,414.6 V2017.7" stroke="#ffffff" stroke-width="3"/><path d="M622.4,416.1 H2360.6" stroke="#000" stroke-width="3" stroke-dasharray="10 10" stroke-dashoffset="-5"/><path d="M622.4,2016.2 H2360.6" stroke="#000" stroke-width="3" stroke-dasharray="9.5 10.5" stroke-dashoffset="-5.6"/><path d="M623.9,414.6 V2017.7" stroke="#000" stroke-width="3" stroke-dasharray="9.5 10.5" stroke-dashoffset="-6"/><path d="M2359.1,414.6 V2017.7" stroke="#000" stroke-width="3" stroke-dasharray="9 11" stroke-dashoffset="-10.8"/><path d="M822.8,564.3 L788.8,565.5 L768.6,570.0 L758.9,574.0 L746.7,585.3 L740.2,595.1 L740.2,610.4 L743.5,617.7 L746.7,625.8 L758.9,642.0 L768.6,648.5 L786.4,655.0 L806.6,655.0 L817.2,651.7 L833.4,645.3 L849.6,629.1 L857.7,616.9 L862.5,604.8 L863.3,585.3 L857.7,578.9 L841.5,571.6 L825.3,570.8 L817.2,568.3" fill="none" stroke="#ec1c24" stroke-width="7" stroke-linejoin="round" stroke-linecap="round"/><path d="M1446,84 Q1460,79 1500,80 L1600,82 Q1650,80 1659,86 Q1662,95 1659,115 L1657,138 Q1656,147 1645,147 L1560,143 L1470,141 Q1450,138 1440,122 Q1433,108 1437,94 Q1439,87 1446,84 Z" fill="none" stroke="#ec1c24" stroke-width="6" stroke-linejoin="round"/><path d="M13,426 Q40,424 64,423 Q84,422 88,428 Q92,440 89,465 L87.5,478 Q86,486 76,486 L33,486 Q10,485 7,478 Q4,465 5,444 Q6,430 13,426 Z" fill="none" stroke="#ec1c24" stroke-width="6.5" stroke-linejoin="round"/></svg>
</body></html>
